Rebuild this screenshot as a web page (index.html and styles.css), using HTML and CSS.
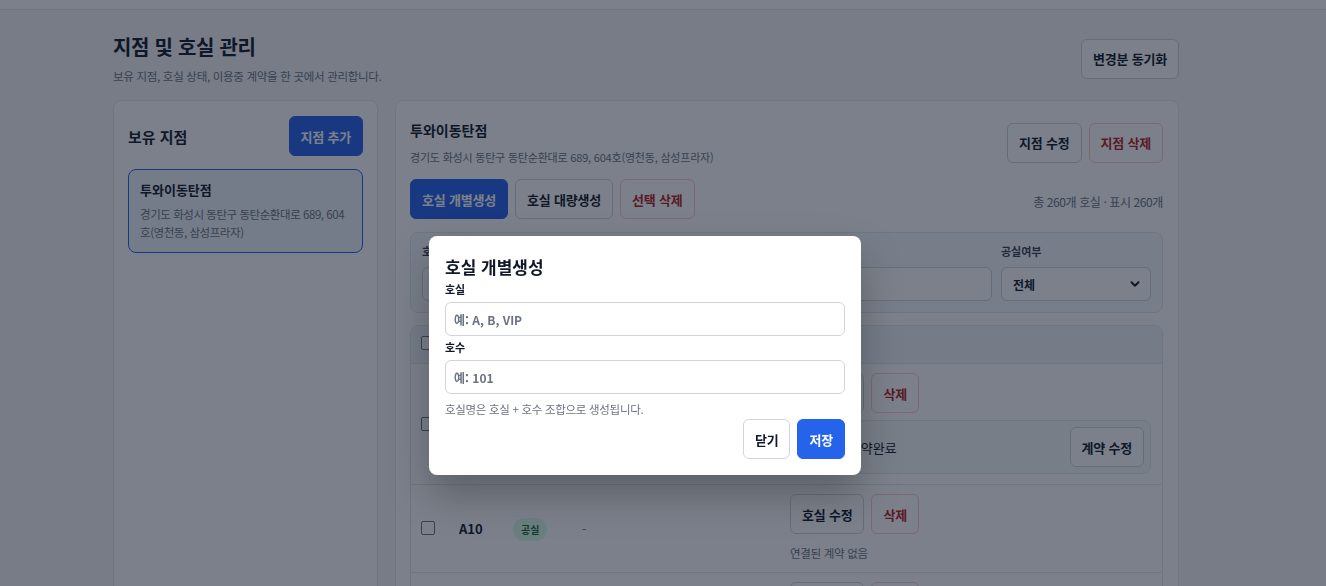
FILE: index.html
```html
<!DOCTYPE html>
<html lang="ko">
<head>
  <meta charset="UTF-8">
  <meta name="viewport" content="width=device-width, initial-scale=1.0">
  <title>지점 및 호실 관리</title>
  <link rel="stylesheet" href="styles.css">
</head>
<body>
  <div class="topbar"></div>

  <main class="page">
    <div class="page-head">
      <div>
        <h1>지점 및 호실 관리</h1>
        <p class="sub">보유 지점, 호실 상태, 이용중 계약을 한 곳에서 관리합니다.</p>
      </div>
      <button class="btn">변경분 동기화</button>
    </div>

    <div class="layout">
      <!-- branch list -->
      <section class="panel branches">
        <div class="panel-head">
          <h2>보유 지점</h2>
          <button class="btn primary">지점 추가</button>
        </div>
        <div class="branch-card active">
          <div class="branch-name">투와이동탄점</div>
          <div class="branch-addr">경기도 화성시 동탄구 동탄순환대로 689, 604호(영천동, 삼성프라자)</div>
        </div>
      </section>

      <!-- selected branch -->
      <section class="panel detail">
        <div class="detail-head">
          <div>
            <h2 class="detail-title">투와이동탄점</h2>
            <p class="detail-addr">경기도 화성시 동탄구 동탄순환대로 689, 604호(영천동, 삼성프라자)</p>
          </div>
          <div class="btn-row">
            <button class="btn">지점 수정</button>
            <button class="btn danger">지점 삭제</button>
          </div>
        </div>

        <div class="toolbar">
          <div class="btn-row">
            <button class="btn primary">호실 개별생성</button>
            <button class="btn">호실 대량생성</button>
            <button class="btn danger">선택 삭제</button>
          </div>
          <span class="count">총 260개 호실 · 표시 260개</span>
        </div>

        <div class="filters">
          <label class="field">
            <span class="field-label">호실</span>
            <input class="input" type="text">
          </label>
          <label class="field">
            <span class="field-label">호수</span>
            <input class="input" type="text">
          </label>
          <label class="field">
            <span class="field-label">계약자</span>
            <input class="input" type="text">
          </label>
          <div class="field">
            <span class="field-label">공실여부</span>
            <div class="select">
              <span>전체</span>
              <svg width="12" height="12" viewBox="0 0 12 12"><path d="M2.5 4.2 6 7.7l3.5-3.5" fill="none" stroke="#111827" stroke-width="2" stroke-linecap="round" stroke-linejoin="round"/></svg>
            </div>
          </div>
        </div>

        <div class="table">
          <div class="row head">
            <input type="checkbox" class="check">
            <span>호실</span>
            <span>상태</span>
            <span>계약자</span>
            <span>관리</span>
          </div>

          <div class="row">
            <input type="checkbox" class="check">
            <span class="room">A1</span>
            <span><span class="badge used">이용중</span></span>
            <span class="muted">홍길동</span>
            <div class="actions">
              <div class="btn-row">
                <button class="btn">호실 수정</button>
                <button class="btn danger">삭제</button>
              </div>
              <div class="contract">
                <span>홍길동 · 계약완료</span>
                <button class="btn">계약 수정</button>
              </div>
            </div>
          </div>

          <div class="row">
            <input type="checkbox" class="check">
            <span class="room">A10</span>
            <span><span class="badge">공실</span></span>
            <span class="muted">-</span>
            <div class="actions">
              <div class="btn-row">
                <button class="btn">호실 수정</button>
                <button class="btn danger">삭제</button>
              </div>
              <div class="no-contract">연결된 계약 없음</div>
            </div>
          </div>

          <div class="row">
            <input type="checkbox" class="check">
            <span class="room">A11</span>
            <span><span class="badge">공실</span></span>
            <span class="muted">-</span>
            <div class="actions">
              <div class="btn-row">
                <button class="btn">호실 수정</button>
                <button class="btn danger">삭제</button>
              </div>
              <div class="no-contract">연결된 계약 없음</div>
            </div>
          </div>
        </div>
      </section>
    </div>
  </main>

  <div class="overlay">
    <div class="modal">
      <h3>호실 개별생성</h3>
      <label class="modal-label">호실</label>
      <input class="input" type="text" placeholder="예: A, B, VIP">
      <label class="modal-label">호수</label>
      <input class="input" type="text" placeholder="예: 101">
      <p class="hint">호실명은 호실 + 호수 조합으로 생성됩니다.</p>
      <div class="modal-foot">
        <button class="btn">닫기</button>
        <button class="btn primary">저장</button>
      </div>
    </div>
  </div>
</body>
</html>
```

FILE: styles.css
```css
* {
  box-sizing: border-box;
}

body {
  margin: 0;
  font-family: 'Noto Sans CJK KR', 'Noto Sans', sans-serif;
  background: #f6f7f9;
  color: #111827;
  overflow: hidden;
}

h1, h2, h3, p {
  margin: 0;
}

.topbar {
  height: 10px;
  background: #fff;
  border-bottom: 1px solid #e5e7eb;
}

.page {
  width: 1066px;
  margin-left: 113px;
  padding-top: 22px;
}

.page-head {
  display: flex;
  justify-content: space-between;
  align-items: center;
}

h1 {
  font-size: 20px;
  line-height: 30px;
  font-weight: 700;
  letter-spacing: -0.3px;
}

.sub {
  margin-top: 5px;
  font-size: 11.5px;
  line-height: 18px;
  color: #6b7280;
  letter-spacing: -0.3px;
}

/* buttons */
.btn {
  height: 40px;
  padding: 0 11px;
  border: 1px solid #d1d5db;
  border-radius: 6px;
  background: #fff;
  color: #111827;
  font-family: inherit;
  font-size: 13px;
  font-weight: 700;
  letter-spacing: -0.2px;
  white-space: nowrap;
  cursor: pointer;
}

.btn.primary {
  background: #2563eb;
  border-color: #2563eb;
  color: #fff;
}

.btn.danger {
  color: #b91c1c;
  border-color: #fecaca;
}

.btn-row {
  display: flex;
  gap: 7px;
}

/* layout */
.layout {
  display: grid;
  grid-template-columns: 265px 1fr;
  gap: 17px;
  margin-top: 15px;
}

.panel {
  background: #fff;
  border: 1px solid #e5e7eb;
  border-radius: 8px;
}

.branches {
  padding: 15px 14px;
}

.panel-head {
  display: flex;
  justify-content: space-between;
  align-items: center;
}

.panel-head h2 {
  font-size: 15px;
  font-weight: 700;
}

.branch-card {
  margin-top: 13px;
  padding: 11px;
  border: 1px solid #e5e7eb;
  border-radius: 8px;
}

.branch-card.active {
  border-color: #2563eb;
  background: #eff6ff;
}

.branch-name {
  font-size: 13px;
  line-height: 18px;
  font-weight: 700;
}

.branch-addr {
  margin-top: 6px;
  font-size: 11.5px;
  line-height: 18px;
  color: #6b7280;
  letter-spacing: -0.45px;
}

.detail {
  padding: 18px 15px 0 14px;
  min-height: 600px;
}

.detail-head {
  display: flex;
  justify-content: space-between;
  align-items: center;
}

.detail-title {
  font-size: 14px;
  line-height: 22px;
  font-weight: 700;
}

.detail-addr {
  margin-top: 7px;
  font-size: 11px;
  line-height: 18px;
  color: #6b7280;
  letter-spacing: -0.2px;
}

.toolbar {
  display: flex;
  justify-content: space-between;
  align-items: center;
  margin-top: 13px;
}

.count {
  font-size: 12px;
  color: #6b7280;
  letter-spacing: -0.4px;
  padding-top: 4px;
}

/* filters */
.filters {
  display: grid;
  grid-template-columns: 1fr 1fr 1fr 150px;
  gap: 9px;
  margin-top: 13px;
  padding: 10px 11px 11px;
  background: #f8fafc;
  border: 1px solid #e5e7eb;
  border-radius: 8px;
}

.field {
  display: flex;
  flex-direction: column;
}

.field-label {
  font-size: 11px;
  line-height: 16px;
  font-weight: 600;
  color: #374151;
  margin-bottom: 8px;
}

.input {
  width: 100%;
  height: 34px;
  padding: 0 8px;
  border: 1px solid #d1d5db;
  border-radius: 6px;
  background: #fff;
  font-family: inherit;
  font-size: 12px;
  font-weight: 600;
  color: #111827;
  outline: none;
}

.input::placeholder {
  color: #6b7280;
}

.select {
  display: flex;
  justify-content: space-between;
  align-items: center;
  height: 34px;
  padding: 0 9px 0 11px;
  border: 1px solid #d1d5db;
  border-radius: 6px;
  background: #fff;
  font-size: 12px;
  font-weight: 700;
}

/* table */
.table {
  margin-top: 12px;
  border: 1px solid #e5e7eb;
  border-radius: 8px;
}

.row {
  display: grid;
  grid-template-columns: 38px 54px 69px 1fr 361px;
  align-items: center;
  padding: 9px 11px 10px 10px;
  border-bottom: 1px solid #e5e7eb;
}

.row.head {
  height: 38px;
  padding-top: 0;
  padding-bottom: 0;
  background: #f1f5f9;
  border-radius: 8px 8px 0 0;
  font-size: 11px;
  font-weight: 700;
  color: #4b5563;
}

.check {
  appearance: none;
  width: 14px;
  height: 14px;
  margin: 0;
  border: 1px solid #6b7280;
  border-radius: 2px;
  background: #fff;
}

.row.head .check {
  margin-top: -3px;
}

.room {
  font-size: 13px;
  font-weight: 700;
}

.muted {
  font-size: 12px;
  color: #6b7280;
}

.badge {
  display: inline-block;
  padding: 4px 8px;
  border-radius: 999px;
  background: #dcfce7;
  color: #166534;
  font-size: 10px;
  font-weight: 700;
}

.badge.used {
  background: #dbeafe;
  color: #1e40af;
}

.contract {
  display: flex;
  justify-content: space-between;
  align-items: center;
  margin-top: 7px;
  padding: 6px 6px 6px 11px;
  border: 1px solid #e5e7eb;
  border-radius: 8px;
  background: #f9fafb;
  font-size: 13px;
}

.no-contract {
  margin-top: 10px;
  font-size: 11.5px;
  line-height: 18px;
  color: #6b7280;
  letter-spacing: -0.3px;
}

/* modal */
.overlay {
  position: fixed;
  inset: 0;
  display: flex;
  justify-content: center;
  align-items: flex-start;
  padding: 236px 36px 0 0;
  background: rgba(15, 23, 42, 0.55);
}

.modal {
  width: 432px;
  padding: 20px 16px 16px;
  background: #fff;
  border-radius: 8px;
  box-shadow: 0 20px 40px rgba(0, 0, 0, 0.25);
}

.modal h3 {
  font-size: 17px;
  line-height: 22px;
  font-weight: 700;
  margin-bottom: 1px;
}

.modal-label {
  display: block;
  margin: 3px 0 5px;
  font-size: 11px;
  line-height: 16px;
  font-weight: 700;
  color: #111827;
}

.hint {
  margin-top: 6px;
  font-size: 11.5px;
  line-height: 18px;
  color: #6b7280;
  letter-spacing: -0.3px;
}

.modal-foot {
  display: flex;
  justify-content: flex-end;
  gap: 7px;
  margin-top: 1px;
}
```
